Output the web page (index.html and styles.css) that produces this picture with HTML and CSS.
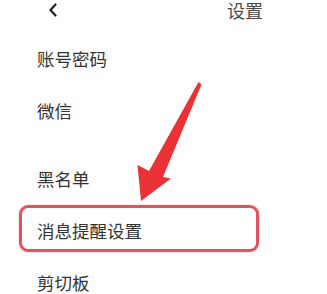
FILE: index.html
```html
<!DOCTYPE html>
<html lang="zh">
<head>
<meta charset="utf-8">
<link rel="stylesheet" href="styles.css">
</head>
<body>
<div class="page">
  <header class="topbar">
    <svg class="back" width="10" height="14" viewBox="0 0 10 14"><path d="M7.5 1.5 L2.5 7 L7.5 12.5" fill="none" stroke="#222" stroke-width="2.2" stroke-linecap="round" stroke-linejoin="round"/></svg>
    <span class="title">设置</span>
  </header>
  <ul class="list">
    <li class="item">账号密码</li>
    <li class="item">微信</li>
    <li class="item group">黑名单</li>
    <li class="item">消息提醒设置</li>
    <li class="item">剪切板</li>
  </ul>
  <div class="highlight"></div>
  <svg class="arrow" width="327" height="294" viewBox="0 0 327 294">
    <polygon points="198.5,82 201.5,84.5 163,177 171,178.5 141,201 137.5,165 149,171" fill="#ea3236"/>
  </svg>
</div>
</body>
</html>
```
FILE: styles.css
```css
html, body {
  margin: 0;
  padding: 0;
  background: #fff;
}
.page {
  position: relative;
  width: 327px;
  height: 294px;
  overflow: hidden;
  font-family: "Noto Sans CJK SC", "Noto Sans", sans-serif;
  color: #333;
}
.topbar {
  height: 20px;
  display: flex;
  align-items: center;
  justify-content: space-between;
  padding: 0 64px 0 48px;
}
.back {
  display: block;
}
.title {
  font-size: 18px;
  line-height: 20px;
  color: #4a4a4a;
}
.list {
  list-style: none;
  margin: 13px 0 0;
  padding: 0;
}
.item {
  height: 52px;
  line-height: 52px;
  padding-left: 37px;
  font-size: 17.5px;
  color: #333;
}
.item.group {
  margin-top: 16px;
}
.highlight {
  position: absolute;
  left: 19px;
  top: 205px;
  width: 240px;
  height: 47px;
  box-sizing: border-box;
  border: 3.5px solid #e0535f;
  border-radius: 9px;
  box-shadow: 0 0 2px rgba(224, 83, 95, 0.45);
}
.arrow {
  position: absolute;
  left: 0;
  top: 0;
}
```
